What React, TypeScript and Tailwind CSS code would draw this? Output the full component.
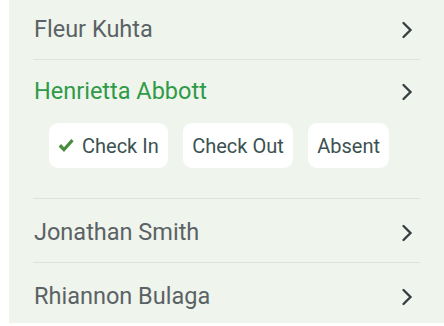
import React from "react";

function Chevron() {
  return (
    <svg width="12" height="18" viewBox="0 0 12 18" className="shrink-0">
      <path d="M2.5 2 L9.5 9 L2.5 16" fill="none" stroke="#343d40" strokeWidth="2.3" strokeLinecap="round" strokeLinejoin="miter" />
    </svg>
  );
}

function Check() {
  return (
    <svg width="16" height="15" viewBox="0 0 16 15" className="shrink-0">
      <path d="M0.6 8.4 L3.1 6 L6 9.2 L13.3 1 L15.6 3.3 L6 14 Z" fill="#4a8c3c" />
    </svg>
  );
}

export default function App() {
  const font = { fontFamily: "Roboto, 'Liberation Sans', sans-serif" };
  return (
    <div className="w-[444px] h-[326px] bg-white pl-[9px] pb-[3px]" style={font}>
      <div className="h-full bg-[#eff5ec] overflow-hidden">
        <div className="mx-[24px] flex flex-col">
          <div className="h-[60px] flex items-center justify-between border-b border-[#dde3da] pl-[1px] pr-[7px]">
            <span className="text-[23.5px] text-[#5b6266] leading-none">Fleur Kuhta</span>
            <Chevron />
          </div>
          <div className="flex flex-col border-b border-[#dde3da] pb-[30px]">
            <div className="h-[62px] pt-[2px] flex items-center justify-between pl-[1px] pr-[7px]">
              <span className="text-[23.5px] text-[#2f9a48] leading-none">Henrietta Abbott</span>
              <Chevron />
            </div>
            <div className="mt-[1px] ml-[16px] flex gap-[15.5px]">
              <button className="h-[45px] px-[9px] bg-white rounded-[9px] flex items-center gap-[8px] text-[20px] text-[#3b5251]">
                <Check />
                <span>Check In</span>
              </button>
              <button className="h-[45px] px-[9px] bg-white rounded-[9px] flex items-center text-[20px] text-[#3b5251]">
                Check Out
              </button>
              <button className="h-[45px] px-[9px] bg-white rounded-[9px] flex items-center text-[20px] text-[#3b5251]">
                Absent
              </button>
            </div>
          </div>
          <div className="h-[64px] pt-[4px] flex items-center justify-between border-b border-[#dde3da] pl-[1px] pr-[7px]">
            <span className="text-[23.5px] text-[#5b6266] leading-none">Jonathan Smith</span>
            <Chevron />
          </div>
          <div className="h-[64px] pt-[4px] flex items-center justify-between pl-[1px] pr-[7px]">
            <span className="text-[23.5px] text-[#5b6266] leading-none">Rhiannon Bulaga</span>
            <Chevron />
          </div>
        </div>
      </div>
    </div>
  );
}
